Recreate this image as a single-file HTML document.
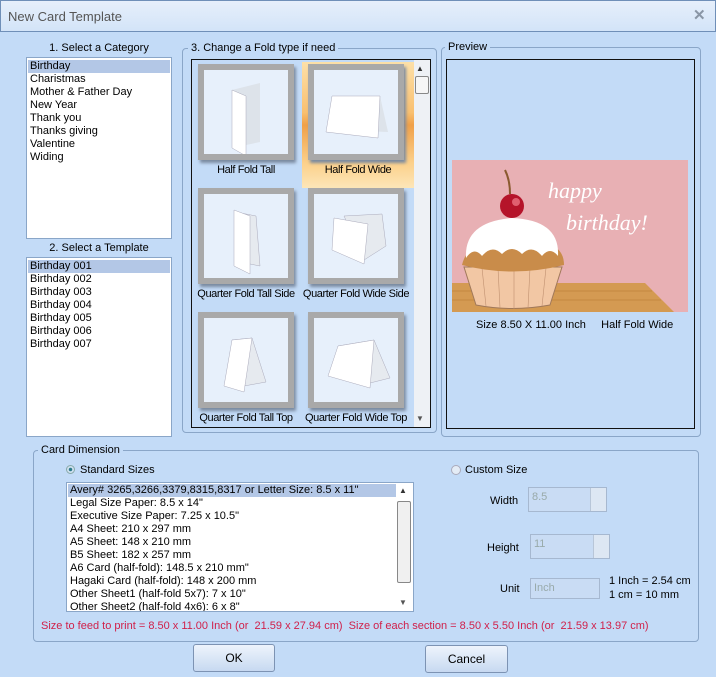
<!DOCTYPE html><html><head><style>
*{margin:0;padding:0;box-sizing:border-box}
body{width:716px;height:677px;background:#c3dbf7;font-family:"Liberation Sans",sans-serif;font-size:11px;color:#000;position:relative;overflow:hidden}
.a{position:absolute}
.title{left:0;top:0;width:716px;height:32px;background:linear-gradient(#e6effb,#d3e4f8);border:1px solid #6f8fb8}
.lb{background:#fff;border:1px solid #8aa6c8}
.it{height:13px;line-height:13px;padding-left:2px;white-space:nowrap}
.sel{background:#b3c7e6}
.grp{border:1px solid #8aa6c8;border-radius:4px}
.gl{background:#c3dbf7;padding:0 3px;line-height:12px}
.tile{width:96px;height:96px;background:#e7f0fb;border:6px solid #a9a9a9;box-shadow:2px 3px 3px #7a8aa0}
.cap{width:112px;text-align:center;white-space:nowrap;letter-spacing:-0.4px}
.btn{border:1px solid #7d93b3;border-radius:3px;background:linear-gradient(#eef4fc,#c7d9f1);text-align:center;line-height:26px;font-size:12px}
.inp{border:1px solid #a6b8d0;background:#c9dcf4;color:#9aa;padding-left:3px;line-height:18px}
.red{color:#d0204a}
</style></head><body>
<div class="a title"></div>
<div class="a" style="left:8px;top:9px;font-size:13px;color:#555">New Card Template</div>
<div class="a" style="left:693px;top:6px;font-size:15px;color:#8a96a6;font-weight:bold">✕</div>

<div class="a" style="left:26px;top:42px;width:146px;text-align:center;font-size:11px">1. Select a Category</div>
<div class="a lb" style="left:26px;top:57px;width:146px;height:182px;padding:2px 1px">
<div class="it sel">Birthday</div><div class="it">Charistmas</div><div class="it">Mother &amp; Father Day</div><div class="it">New Year</div><div class="it">Thank you</div><div class="it">Thanks giving</div><div class="it">Valentine</div><div class="it">Widing</div></div>
<div class="a" style="left:26px;top:242px;width:146px;text-align:center">2. Select a Template</div>
<div class="a lb" style="left:26px;top:257px;width:146px;height:180px;padding:2px 1px">
<div class="it sel">Birthday 001</div><div class="it">Birthday 002</div><div class="it">Birthday 003</div><div class="it">Birthday 004</div><div class="it">Birthday 005</div><div class="it">Birthday 006</div><div class="it">Birthday 007</div></div>

<div class="a grp" style="left:182px;top:48px;width:255px;height:385px"></div>
<div class="a gl" style="left:188px;top:42px">3. Change a Fold type if need</div>
<div class="a" style="left:191px;top:59px;width:240px;height:369px;border:1px solid #111;background:#c3dbf7"></div>
<div class="a" style="left:414px;top:60px;width:16px;height:367px;background:#eef1f5"></div>
<div class="a" style="left:416px;top:64px;font-size:8px;color:#333">▲</div>
<div class="a" style="left:415px;top:76px;width:14px;height:18px;border:1px solid #888;background:#f6f6f6;border-radius:2px"></div>
<div class="a" style="left:416px;top:414px;font-size:8px;color:#555">▼</div>
<div class="a" style="left:302px;top:62px;width:112px;height:126px;background:linear-gradient(#fde0a8 0%,#f9c070 40%,#f0a048 50%,#fcd08a 80%,#fde6b8 100%)"></div>

<div class="a tile" style="left:198px;top:64px"><svg width="84" height="84"><polygon points="28,20 56,13 56,72 28,78" fill="#dde3ea"/><polygon points="28,20 42,26 42,86 28,78" fill="#fff" stroke="#aab" stroke-width=".5"/></svg></div>
<div class="a cap" style="left:190px;top:164px">Half Fold Tall</div>
<div class="a tile" style="left:308px;top:64px"><svg width="84" height="84"><polygon points="18,26 66,26 74,62 24,60" fill="#dde3ea"/><polygon points="18,26 66,26 64,68 12,62" fill="#fff" stroke="#aab" stroke-width=".5"/></svg></div>
<div class="a cap" style="left:302px;top:164px">Half Fold Wide</div>

<div class="a tile" style="left:198px;top:188px"><svg width="84" height="84"><polygon points="32,18 52,22 56,72 36,68" fill="#e6eaef" stroke="#aab" stroke-width=".5"/><polygon points="30,16 46,22 46,80 30,72" fill="#fff" stroke="#aab" stroke-width=".5"/></svg></div>
<div class="a cap" style="left:190px;top:288px">Quarter Fold Tall Side</div>
<div class="a tile" style="left:308px;top:188px"><svg width="84" height="84"><polygon points="30,22 68,20 72,52 50,66" fill="#e6eaef" stroke="#aab" stroke-width=".5"/><polygon points="20,24 54,30 50,70 18,56" fill="#fff" stroke="#aab" stroke-width=".5"/></svg></div>
<div class="a cap" style="left:300px;top:288px">Quarter Fold Wide Side</div>

<div class="a tile" style="left:198px;top:312px"><svg width="84" height="84"><polygon points="28,22 48,20 62,64 40,68" fill="#e6eaef" stroke="#aab" stroke-width=".5"/><polygon points="28,22 48,20 40,74 20,68" fill="#fff" stroke="#aab" stroke-width=".5"/></svg></div>
<div class="a cap" style="left:190px;top:412px">Quarter Fold Tall Top</div>
<div class="a tile" style="left:308px;top:312px"><svg width="84" height="84"><polygon points="24,28 60,22 76,60 52,66" fill="#e6eaef" stroke="#aab" stroke-width=".5"/><polygon points="24,28 60,22 56,70 14,58" fill="#fff" stroke="#aab" stroke-width=".5"/></svg></div>
<div class="a cap" style="left:300px;top:412px">Quarter Fold Wide Top</div>

<div class="a grp" style="left:441px;top:47px;width:260px;height:390px"></div>
<div class="a gl" style="left:445px;top:41px">Preview</div>
<div class="a" style="left:446px;top:59px;width:249px;height:370px;border:1px solid #111"></div>
<svg class="a" style="left:452px;top:160px" width="236" height="152">
<rect width="236" height="152" fill="#e8b0b4"/>
<polygon points="0,123 193,123 222,152 0,152" fill="#d49a52"/>
<g stroke="#c58840" stroke-width="1"><line x1="0" y1="131" x2="200" y2="131"/><line x1="0" y1="140" x2="209" y2="140"/></g>
<path d="M12,107 L110,107 L98,145 Q60,152 24,145 Z" fill="#f2c7a4" stroke="#a0785a"/>
<g stroke="#c09070" stroke-width=".6"><line x1="30" y1="108" x2="34" y2="146"/><line x1="46" y1="108" x2="48" y2="148"/><line x1="62" y1="108" x2="62" y2="149"/><line x1="78" y1="108" x2="76" y2="148"/><line x1="94" y1="108" x2="90" y2="146"/></g>
<path d="M10,105 Q14,88 30,84 L95,84 Q112,88 112,105 Q60,118 10,105 Z" fill="#c98c4a"/>
<path d="M14,98 Q12,62 60,58 Q108,60 106,96 Q98,86 90,96 Q80,84 70,94 Q60,84 50,94 Q40,84 30,96 Q22,86 14,98Z" fill="#fff"/>
<circle cx="60" cy="46" r="12" fill="#b5142a"/><circle cx="64" cy="42" r="4" fill="#e06070"/>
<path d="M58,34 Q58,20 53,10" stroke="#8a5a30" stroke-width="2" fill="none"/>
<text x="96" y="38" font-family="Liberation Serif,serif" font-style="italic" font-size="22" fill="#fff">happy</text>
<text x="114" y="70" font-family="Liberation Serif,serif" font-style="italic" font-size="22" fill="#fff">birthday!</text>
</svg>
<div class="a" style="left:476px;top:319px;font-size:11px">Size 8.50 X 11.00 Inch&nbsp;&nbsp;&nbsp;&nbsp; Half Fold Wide</div>

<div class="a grp" style="left:33px;top:450px;width:666px;height:192px"></div>
<div class="a gl" style="left:38px;top:444px">Card Dimension</div>
<div class="a" style="left:66px;top:465px;width:9px;height:9px;border-radius:50%;background:radial-gradient(#2a7a8a 30%,#cfe0f0 40%);border:1px solid #8aa"></div>
<div class="a" style="left:80px;top:464px">Standard Sizes</div>
<div class="a lb" style="left:66px;top:482px;width:348px;height:130px;padding:1px;overflow:hidden">
<div class="it sel" style="width:328px">Avery# 3265,3266,3379,8315,8317 or Letter Size: 8.5 x 11"</div><div class="it">Legal Size Paper: 8.5 x 14"</div><div class="it">Executive Size Paper: 7.25 x 10.5"</div><div class="it">A4 Sheet: 210 x 297 mm</div><div class="it">A5 Sheet: 148 x 210 mm</div><div class="it">B5 Sheet: 182 x 257 mm</div><div class="it">A6 Card (half-fold): 148.5 x 210 mm"</div><div class="it">Hagaki Card (half-fold): 148 x 200 mm</div><div class="it">Other Sheet1 (half-fold 5x7): 7 x 10"</div><div class="it">Other Sheet2 (half-fold 4x6): 6 x 8"</div></div>
<div class="a" style="left:396px;top:483px;width:17px;height:128px;background:#fff"></div>
<div class="a" style="left:399px;top:486px;font-size:8px;color:#333">▲</div>
<div class="a" style="left:397px;top:501px;width:14px;height:82px;border:1px solid #888;background:#f0f0f0;border-radius:2px"></div>
<div class="a" style="left:399px;top:598px;font-size:8px;color:#555">▼</div>
<div class="a red" style="left:41px;top:620px">Size to feed to print = 8.50 x 11.00 Inch (or&nbsp; 21.59 x 27.94 cm)&nbsp; Size of each section = 8.50 x 5.50 Inch (or&nbsp; 21.59 x 13.97 cm)</div>

<div class="a" style="left:451px;top:465px;width:10px;height:10px;border-radius:50%;background:#e4ecf6;border:1px solid #aab"></div>
<div class="a" style="left:465px;top:464px">Custom Size</div>
<div class="a" style="left:490px;top:495px">Width</div>
<div class="a inp" style="left:528px;top:487px;width:79px;height:25px">8.5</div>
<div class="a" style="left:590px;top:488px;width:16px;height:23px;border-left:1px solid #b8c6d8;background:#dde7f3"></div>
<div class="a" style="left:487px;top:542px">Height</div>
<div class="a inp" style="left:530px;top:534px;width:80px;height:25px">11</div>
<div class="a" style="left:593px;top:535px;width:16px;height:23px;border-left:1px solid #b8c6d8;background:#dde7f3"></div>
<div class="a" style="left:500px;top:583px">Unit</div>
<div class="a inp" style="left:530px;top:578px;width:70px;height:21px">Inch</div>
<div class="a" style="left:609px;top:575px">1 Inch = 2.54 cm</div>
<div class="a" style="left:609px;top:589px">1 cm = 10 mm</div>

<div class="a btn" style="left:193px;top:644px;width:82px;height:28px">OK</div>
<div class="a btn" style="left:425px;top:645px;width:83px;height:28px">Cancel</div>
</body></html>
